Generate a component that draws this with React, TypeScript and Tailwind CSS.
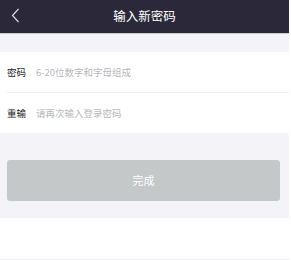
export default function App() {
  return (
    <div className="w-[289px] h-[260px] bg-white font-['Noto_Sans_CJK_SC',sans-serif]">
      <div className="relative flex h-[34px] items-center justify-center border-b border-[#c8c8d0] bg-[#2b2939]">
        <svg className="absolute left-[11px] top-[8px]" width="9" height="15" viewBox="0 0 9 15" fill="none">
          <path d="M7.5 1L1.5 7.5L7.5 14" stroke="#d8d8de" strokeWidth="1.2" />
        </svg>
        <span className="text-[12.5px] text-white">输入新密码</span>
      </div>
      <div className="h-[18px] bg-[#f4f4f8]" />
      <div className="pl-[7px]">
        <div className="flex h-[41px] items-center border-b border-[#ececf0] text-[9.5px]">
          <span className="w-[29px] text-[#222]">密码</span>
          <span className="text-[#b8b8bc]">6-20位数字和字母组成</span>
        </div>
        <div className="flex h-[40px] items-center pt-[1px] text-[9.5px]">
          <span className="w-[29px] text-[#222]">重输</span>
          <span className="text-[#b8b8bc]">请再次输入登录密码</span>
        </div>
      </div>
      <div className="bg-[#f4f4f8] pl-[7px] pr-[9px] pb-[17px] pt-[27px]">
        <div className="flex h-[41px] items-center justify-center rounded-[3px] bg-[#c4c8c9] text-[11px] text-white">完成</div>
      </div>
      <div className="h-[42px] border-b border-[#ececf0]" />
    </div>
  );
}
